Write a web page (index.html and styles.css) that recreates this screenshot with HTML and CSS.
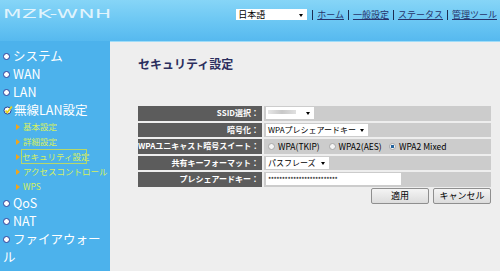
FILE: index.html
```html
<!DOCTYPE html>
<html lang="ja">
<head>
    <meta charset="UTF-8">
    <title>MZK-WNH - セキュリティ設定</title>
    <link rel="stylesheet" href="styles.css">
</head>
<body>
    <div class="header">
        <div class="logo">MZK-WNH</div>
        <div class="top-nav">
            <div class="lang-select">日本語<span class="arrow"></span></div>
            <span class="sep"></span>
            <a href="#">ホーム</a>
            <span class="sep"></span>
            <a href="#">一般設定</a>
            <span class="sep"></span>
            <a href="#">ステータス</a>
            <span class="sep"></span>
            <a href="#">管理ツール</a>
            <span class="sep"></span>
        </div>
    </div>

    <div class="main">
        <ul class="sidebar">
            <li class="menu"><span class="dot"></span>システム</li>
            <li class="menu"><span class="dot"></span>WAN</li>
            <li class="menu"><span class="dot"></span>LAN</li>
            <li class="menu open">
                <svg class="check" viewBox="0 0 10 10" aria-hidden="true">
                    <circle cx="4.5" cy="5.5" r="3.5" fill="#fff" stroke="#2b3f8f" stroke-width="1"></circle>
                    <path d="M2.5 5.5 L4.3 7.5 L8.8 1.5" fill="none" stroke="#e7d21c" stroke-width="1.8"></path>
                </svg>無線LAN設定
            </li>
            <li class="sub">基本設定</li>
            <li class="sub">詳細設定</li>
            <li class="sub active">セキュリティ設定</li>
            <li class="sub">アクセスコントロール</li>
            <li class="sub">WPS</li>
            <li class="menu"><span class="dot"></span>QoS</li>
            <li class="menu"><span class="dot"></span>NAT</li>
            <li class="menu last"><span class="dot"></span>ファイアウォー<br>ル</li>
        </ul>

        <div class="content">
            <h1>セキュリティ設定</h1>

            <div class="form">
                <div class="row">
                    <div class="label">SSID選択：</div>
                    <div class="value">
                        <div class="select ssid"><span class="blur"></span><span class="arrow"></span></div>
                    </div>
                </div>
                <div class="row">
                    <div class="label">暗号化：</div>
                    <div class="value">
                        <div class="select enc">WPAプレシェアードキー<span class="arrow"></span></div>
                    </div>
                </div>
                <div class="row">
                    <div class="label">WPAユニキャスト暗号スイート：</div>
                    <div class="value radios">
                        <label class="opt"><span class="radio"></span>WPA(TKIP)</label>
                        <label class="opt"><span class="radio"></span>WPA2(AES)</label>
                        <label><span class="radio checked"></span>WPA2 Mixed</label>
                    </div>
                </div>
                <div class="row">
                    <div class="label">共有キーフォーマット：</div>
                    <div class="value">
                        <div class="select fmt">パスフレーズ<span class="arrow"></span></div>
                    </div>
                </div>
                <div class="row">
                    <div class="label">プレシェアードキー：</div>
                    <div class="value">
                        <div class="input">*************************</div>
                    </div>
                </div>
            </div>

            <div class="buttons">
                <button type="button">適用</button>
                <button type="button">キャンセル</button>
            </div>
        </div>
    </div>
</body>
</html>
```

FILE: styles.css
```css
:root {
    --side-blue: #4cb2ec;
    --content-bg: #eeeeee;
    --label-bg: #5c5c5c;
    --value-bg: #cccccc;
    --link: #27336a;
    --sub-text: #d6f060;
}

* {
    box-sizing: border-box;
    margin: 0;
    padding: 0;
}

body {
    width: 500px;
    height: 271px;
    overflow: hidden;
    font-family: "Noto Sans CJK JP", "Liberation Sans", sans-serif;
    background: var(--side-blue);
}

/* Cabeçalho */
.header {
    height: 41px;
    background: linear-gradient(#86d5f7, #6ac6f3 55%, #56b9ef);
    display: flex;
    justify-content: space-between;
    align-items: flex-start;
    padding: 6px 0 0 3px;
}

.logo {
    font-family: "DejaVu Sans", sans-serif;
    font-weight: normal;
    font-size: 13px;
    line-height: 16px;
    color: rgba(255, 255, 255, 0.8);
    letter-spacing: 0.3px;
    transform: scaleX(1.65);
    transform-origin: left center;
}

.top-nav {
    display: flex;
    align-items: center;
    gap: 4px;
    padding-top: 3px;
    margin-right: -2px;
}

.lang-select {
    width: 71px;
    height: 11px;
    background: #fff;
    font-size: 9px;
    line-height: 11px;
    color: #000;
    padding-left: 2px;
    position: relative;
    margin-right: 1px;
}

.arrow {
    position: absolute;
    right: 4px;
    top: 50%;
    margin-top: -1px;
    border-left: 2.5px solid transparent;
    border-right: 2.5px solid transparent;
    border-top: 3px solid #000;
}

.sep {
    width: 1px;
    height: 10px;
    background: #1d2d52;
}

.top-nav a {
    font-size: 9px;
    line-height: 11px;
    color: var(--link);
    text-decoration: underline;
}

/* Corpo */
.main {
    display: flex;
    height: 230px;
}

.sidebar {
    width: 110px;
    list-style: none;
    padding-top: 6px;
    color: #fff;
    flex-shrink: 0;
}

.menu {
    font-size: 12.5px;
    line-height: 18px;
    padding-left: 3px;
    display: flex;
    align-items: center;
}

.menu.last {
    display: block;
}

.dot {
    display: inline-block;
    width: 7px;
    height: 7px;
    border-radius: 50%;
    background: #fff;
    border: 1.5px solid #2e3e9a;
    margin-right: 3px;
    vertical-align: 1px;
}

.check {
    width: 10px;
    height: 10px;
    margin-right: 1px;
}

.sub {
    font-size: 8.5px;
    line-height: 15px;
    color: var(--sub-text);
    padding-left: 23px;
    position: relative;
    white-space: nowrap;
}

.sub::before {
    content: "";
    position: absolute;
    left: 16px;
    top: 4.5px;
    border-top: 3px solid transparent;
    border-bottom: 3px solid transparent;
    border-left: 4px solid #f2a51c;
}

.sub.active {
    margin-left: 21px;
    padding-left: 1px;
    width: 66px;
    outline: 1px solid #b6d86a;
    outline-offset: -1px;
}

.sub.active::before {
    left: -5px;
}

.content {
    flex: 1;
    background: var(--content-bg);
    border-top: 1px solid #9fdcf8;
    padding: 13px 9px 0 28px;
}

h1 {
    font-size: 12px;
    line-height: 18px;
    color: #2c2f5e;
    font-weight: bold;
    margin-bottom: 33px;
}

/* Formulário */
.form {
    display: flex;
    flex-direction: column;
    gap: 2px;
}

.row {
    display: flex;
    gap: 2px;
    height: 14.5px;
}

.label {
    width: 124px;
    background: var(--label-bg);
    color: #fff;
    font-size: 8px;
    font-weight: bold;
    text-align: right;
    line-height: 14.5px;
    padding-right: 3px;
    white-space: nowrap;
}

.value {
    flex: 1;
    background: var(--value-bg);
    display: flex;
    align-items: center;
    padding-left: 2px;
    font-size: 8px;
    color: #000;
}

.select {
    height: 12px;
    background: #fff;
    line-height: 12px;
    padding-left: 2px;
    position: relative;
}

.ssid {
    width: 48px;
}

.blur {
    display: inline-block;
    width: 28px;
    height: 4px;
    background: linear-gradient(90deg, #e6e6e6, #c8c8c8, #e0e0e0);
    vertical-align: 2px;
}

.enc {
    width: 102px;
}

.fmt {
    width: 63px;
}

.input {
    width: 135px;
    height: 12px;
    background: #fff;
    font-size: 7px;
    line-height: 12px;
    padding-left: 2px;
    letter-spacing: -0.5px;
    overflow: hidden;
}

.radios {
    padding-left: 4px;
    font-size: 8.5px;
}

.radios label {
    display: flex;
    align-items: center;
    gap: 3px;
}

.radios .opt {
    width: 60.5px;
}

.radio {
    width: 7px;
    height: 7px;
    border-radius: 50%;
    background: #f5f5f5;
    border: 1px solid #a8a8a8;
}

.radio.checked {
    background: radial-gradient(circle, #24639e 0 1.6px, #f5f5f5 2px);
}

.buttons {
    display: flex;
    justify-content: flex-end;
    gap: 4px;
    margin-top: 1px;
}

.buttons button {
    width: 58px;
    height: 16px;
    font-family: inherit;
    font-size: 9px;
    line-height: 12px;
    color: #000;
    background: linear-gradient(#f4f4f4, #dcdcdc);
    border: 1px solid #8f8f8f;
    border-radius: 2px;
}
```
